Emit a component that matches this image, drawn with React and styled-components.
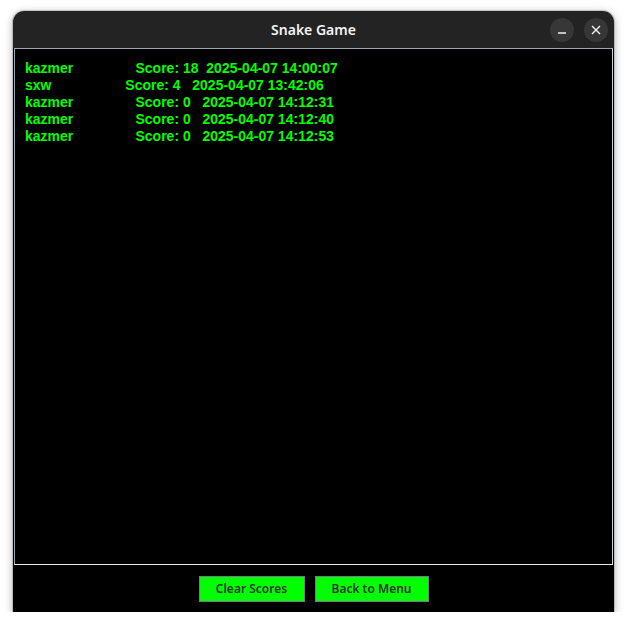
import { styled, createGlobalStyle } from "styled-components"

const scores = [
  { name: "kazmer", score: 18, date: "2025-04-07 14:00:07" },
  { name: "sxw", score: 4, date: "2025-04-07 13:42:06" },
  { name: "kazmer", score: 0, date: "2025-04-07 14:12:31" },
  { name: "kazmer", score: 0, date: "2025-04-07 14:12:40" },
  { name: "kazmer", score: 0, date: "2025-04-07 14:12:53" },
]

const formatLine = s =>
  `${s.name.padEnd(22, " ")}Score: ${String(s.score).padEnd(3, " ")} ${s.date}`

function App() {
  return (
    <>
      <GlobalStyle />
      <Window>
        <TitleBar>
          <span />
          <Title>Snake Game</Title>
          <Controls>
            <CircleButton aria-label="Minimize">
              <svg width="10" height="10" viewBox="0 0 10 10">
                <line x1="1" y1="8" x2="9" y2="8" stroke="#f2f2f2" strokeWidth="1.4" />
              </svg>
            </CircleButton>
            <CircleButton aria-label="Close">
              <svg width="10" height="10" viewBox="0 0 10 10">
                <path d="M1 1 L9 9 M9 1 L1 9" stroke="#f2f2f2" strokeWidth="1.4" />
              </svg>
            </CircleButton>
          </Controls>
        </TitleBar>
        <Body>
          <ScorePanel>
            {scores.map((s, i) => (
              <ScoreLine key={i}>{formatLine(s)}</ScoreLine>
            ))}
          </ScorePanel>
          <Footer>
            <GreenButton $width={106}>Clear Scores</GreenButton>
            <GreenButton $width={114}>Back to Menu</GreenButton>
          </Footer>
        </Body>
      </Window>
    </>
  )
}

export default App

const GlobalStyle = createGlobalStyle`
  html, body {
    margin: 0;
    padding: 0;
    background: #ffffff;
  }
`

const Window = styled.div`
  display: flex;
  flex-direction: column;
  width: 601px;
  height: 601px;
  margin: 11px 0 0 13px;
  border-radius: 11px 11px 0 0;
  overflow: hidden;
  box-shadow: 0 2px 8px rgba(0, 0, 0, 0.35), 0 0 0 1px rgba(0, 0, 0, 0.15);
`

const TitleBar = styled.div`
  display: grid;
  grid-template-columns: 1fr auto 1fr;
  align-items: center;
  height: 37px;
  padding-right: 6px;
  background: #232323;
`

const Title = styled.div`
  color: #f2f2f2;
  font-family: "Noto Sans", "Open Sans", sans-serif;
  font-size: 14px;
  font-weight: 600;
  padding-left: 6px;
`

const Controls = styled.div`
  display: flex;
  justify-content: flex-end;
  gap: 10px;
`

const CircleButton = styled.div`
  display: flex;
  align-items: center;
  justify-content: center;
  width: 24px;
  height: 24px;
  border-radius: 50%;
  background: #373737;
`

const Body = styled.div`
  flex: 1;
  display: flex;
  flex-direction: column;
  background: #000000;
`

const ScorePanel = styled.div`
  flex: 1;
  margin: 0 1px;
  padding: 11px 10px 9px;
  border: 1px solid #9aa6b2;
  border-bottom-color: #e8e8e8;
  border-right-color: #c9d2da;
`

const ScoreLine = styled.div`
  white-space: pre;
  color: #00ff00;
  font-family: "Liberation Sans", Arial, sans-serif;
  font-size: 14px;
  font-weight: 700;
  line-height: 17px;
`

const Footer = styled.div`
  display: flex;
  justify-content: center;
  align-items: center;
  gap: 10px;
  height: 47px;
`

const GreenButton = styled.button`
  width: ${props => props.$width}px;
  height: 26px;
  padding: 0;
  border: 1px solid #7a7a8c;
  background: #00ff00;
  color: #333333;
  font-family: "Noto Sans", "Open Sans", sans-serif;
  font-size: 12px;
  font-weight: 600;
`
